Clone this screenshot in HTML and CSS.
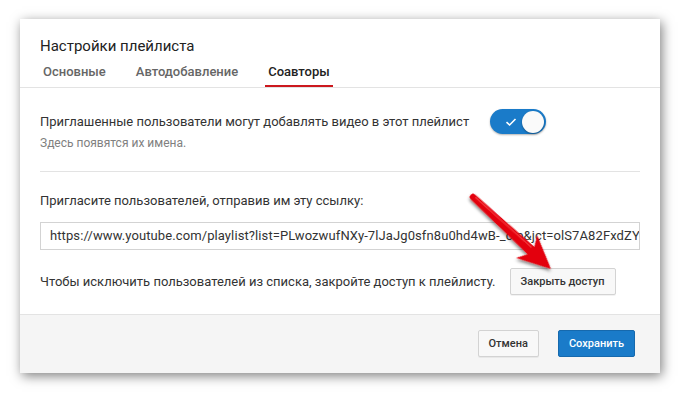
FILE: index.html
```html
<!DOCTYPE html>
<html lang="ru">
<head>
  <meta charset="UTF-8">
  <title>Настройки плейлиста</title>
  <link rel="stylesheet" href="styles.css">
</head>
<body>
  <div class="dialog">
    <header class="dialog-header">
      <h1>Настройки плейлиста</h1>
      <nav class="tabs">
        <span class="tab">Основные</span>
        <span class="tab">Автодобавление</span>
        <span class="tab active">Соавторы</span>
      </nav>
    </header>

    <div class="dialog-body">
      <section class="section section-toggle">
        <div class="toggle-row">
          <span class="label">Приглашенные пользователи могут добавлять видео в этот плейлист</span>
          <span class="toggle">
            <svg class="toggle-check" width="12" height="10" viewBox="0 0 12 10">
              <path d="M1.5 5.2 L4.6 8 L10.5 2" fill="none" stroke="#fff" stroke-width="1.6"/>
            </svg>
            <span class="toggle-knob"></span>
          </span>
        </div>
        <div class="hint">Здесь появятся их имена.</div>
      </section>

      <section class="section section-link">
        <div class="label">Пригласите пользователей, отправив им эту ссылку:</div>
        <div class="link-box"><span class="link-text">https://www.youtube.com/playlist?list=PLwozwufNXy-7lJaJg0sfn8u0hd4wB-_cIp&amp;jct=olS7A82FxdZY</span></div>
        <div class="revoke-row">
          <span class="label">Чтобы исключить пользователей из списка, закройте доступ к плейлисту.</span>
          <button class="plain-button">Закрыть доступ</button>
        </div>
      </section>
    </div>

    <footer class="dialog-footer">
      <button class="plain-button footer-button">Отмена</button>
      <button class="primary-button footer-button">Сохранить</button>
    </footer>

    <!-- red pointer arrow drawn over the dialog -->
    <svg class="pointer" width="140" height="110" viewBox="0 0 140 110">
      <defs>
        <filter id="arrow-shadow" x="-20%" y="-20%" width="150%" height="150%">
          <feDropShadow dx="1.5" dy="2" stdDeviation="1.6" flood-color="#000" flood-opacity="0.45"/>
        </filter>
      </defs>
      <g transform="translate(16 13) rotate(42.7)" filter="url(#arrow-shadow)">
        <path d="M0 -3.2 L79 -5 L73 -15.5 L106 0 L73 15.5 L79 5 L0 3.2 A3.2 3.2 0 0 1 0 -3.2 Z" fill="#e3000c"/>
        <path d="M2 -1.4 L77 -2.6" stroke="#ff5a5a" stroke-width="1.2" opacity="0.6"/>
      </g>
    </svg>
  </div>
</body>
</html>
```

FILE: styles.css
```css
:root {
  --blue: #1a7bc9;
  --red: #cc181e;
  --text-color: #333;
  --tab-gray: #666;
  --hint-gray: #808080;
  --line: #e3e3e3;
}

* {
  margin: 0;
  padding: 0;
  box-sizing: border-box;
}

body {
  font-family: Roboto, 'Noto Sans', sans-serif;
  background-color: #fff;
  color: var(--text-color);
  padding: 19px 20px;
}

.dialog {
  position: relative;
  width: 640px;
  height: 354px;
  background-color: #fff;
  box-shadow: 2px 3px 11px rgba(0, 0, 0, 0.5);
  display: flex;
  flex-direction: column;
}

/* Header */
.dialog-header {
  padding: 17px 20px 0;
  border-bottom: 1px solid var(--line);
}

.dialog-header h1 {
  font-size: 15px;
  font-weight: 400;
  line-height: 20px;
  color: #222;
}

.tabs {
  display: flex;
  gap: 24px;
  margin-top: 8px;
}

.tab {
  font-size: 13px;
  font-weight: 500;
  line-height: 16px;
  color: var(--tab-gray);
  padding: 0 3px 5px;
  border-bottom: 2px solid transparent;
}

.tab.active {
  color: #222;
  border-bottom-color: var(--red);
}

/* Body */
.dialog-body {
  flex: 1;
  padding: 0 20px;
}

.section-toggle {
  padding: 21px 0 19px;
  border-bottom: 1px solid var(--line);
}

.label {
  font-size: 13px;
  line-height: 18px;
  color: var(--text-color);
}

.toggle-row {
  display: flex;
  align-items: center;
  gap: 21px;
}

.toggle {
  position: relative;
  width: 56px;
  height: 25px;
  border-radius: 13px;
  background-color: var(--blue);
  box-shadow: 0 1px 2px rgba(0, 0, 0, 0.3);
  display: flex;
  align-items: center;
  justify-content: space-between;
  padding: 0 2px 0 15px;
}

.toggle-knob {
  width: 22px;
  height: 22px;
  border-radius: 50%;
  background-color: #fafafa;
  box-shadow: 0 1px 2px rgba(0, 0, 0, 0.35);
}

.hint {
  font-size: 12px;
  line-height: 17px;
  color: var(--hint-gray);
  margin-top: 1px;
}

.section-link {
  padding-top: 20px;
}

.link-box {
  margin-top: 12px;
  height: 28px;
  border: 1px solid #d3d3d3;
  padding: 0 9px;
  font-size: 13px;
  line-height: 26px;
  white-space: nowrap;
  overflow: hidden;
  color: var(--text-color);
}

.link-text {
  letter-spacing: 0.1px;
}

.revoke-row {
  display: flex;
  align-items: center;
  gap: 14px;
  margin-top: 18px;
}

button {
  font-family: Roboto, 'Noto Sans', sans-serif;
  font-size: 11px;
  font-weight: 500;
  height: 27px;
  padding: 0 10px;
  border-radius: 2px;
  cursor: pointer;
}

.plain-button {
  background-color: #f8f8f8;
  border: 1px solid #d3d3d3;
  color: #333;
  box-shadow: 0 1px 0 rgba(0, 0, 0, 0.05);
}

.primary-button {
  background-color: var(--blue);
  border: 1px solid #1669ad;
  color: #fff;
}

/* Footer */
.dialog-footer {
  height: 59px;
  background-color: #f5f5f5;
  border-top: 1px solid var(--line);
  display: flex;
  justify-content: flex-end;
  align-items: flex-start;
  gap: 19px;
  padding: 15px 25px 0 0;
}

.footer-button {
  padding: 0 10px;
}

/* Pointer arrow */
.pointer {
  position: absolute;
  left: 437px;
  top: 165px;
}
```
